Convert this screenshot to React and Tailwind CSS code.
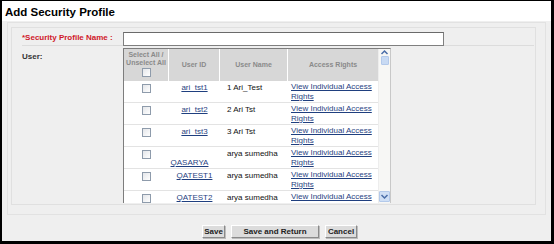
import React from "react";

const users = [
  { id: "ari_tst1", name: "1 Ari_Test" },
  { id: "ari_tst2", name: "2 Ari Tst" },
  { id: "ari_tst3", name: "3 Ari Tst" },
  { id: "QASARYA", name: "arya sumedha", wrapId: true },
  { id: "QATEST1", name: "arya sumedha" },
  { id: "QATEST2", name: "arya sumedha" },
];

const Box = () => (
  <span className="inline-block w-[9px] h-[9px] border border-[#8e9bab] bg-gradient-to-br from-[#e4e6ea] to-white" />
);

const Btn = ({ label, w }) => (
  <button
    className={`${w} h-[13px] text-[8px] leading-[11px] font-bold text-[#222] bg-[#dcdcdc] border border-t-white border-l-white border-r-[#8a8a8a] border-b-[#8a8a8a] shadow-[1px_1px_0_#bdbdbd]`}
  >
    {label}
  </button>
);

const App = () => {
  return (
    <div
      className="w-[554px] h-[244px] box-border border-black border-t border-l-2 border-r-[3px] border-b-[3px] flex flex-col bg-[#efefef] overflow-hidden"
      style={{ fontFamily: '"Liberation Sans", Arial, sans-serif' }}
    >
      <div className="h-[20px] bg-white px-[3px] pt-[5px] text-[11.5px] leading-[13px] font-bold text-black">
        Add Security Profile
      </div>
      <div className="flex-1 px-[5px] pt-[1px]">
        <div className="border border-[#e2e2e2] pr-[9px] pb-[8px] h-[193px]">
          <div className="border border-[#e0e0e0] ml-[3px] mt-[4px] h-[178px] pl-[10px] pr-[1px]">
            <div className="flex items-start h-[18px] border-b border-[#dcdcdc]">
              <div className="w-[101px] pt-[5px] text-[8px] leading-[9px] font-bold text-[#d0182a]">
                *Security Profile Name :
              </div>
              <div className="mt-[4px] w-[321px] h-[14px] bg-white border border-[#7f7f7f] border-t-[#6a6a6a]" />
            </div>
            <div className="flex items-start">
              <div className="w-[101px] pt-[6px] text-[8px] leading-[9px] font-bold text-[#333]">
                User:
              </div>
              <div className="mt-[2px] w-[268px] h-[155px] border border-[#7d7d7d] border-r-[#c8c8c8] border-b-0 flex bg-white overflow-hidden">
                <div className="w-[255px] flex flex-col">
                  <div className="flex h-[32px] shrink-0 bg-[#d7d7d7] text-[7px] leading-[8px] font-bold text-[#8a8a8a]">
                    <div className="w-[45px] flex flex-col items-center pt-[2px] border-r border-white">
                      <span>Select All /</span>
                      <span>Unselect All</span>
                      <span className="mt-[1px]"><Box /></span>
                    </div>
                    <div className="w-[51px] flex items-center justify-center border-r border-white">User ID</div>
                    <div className="w-[68px] flex items-center justify-center border-r border-white">User Name</div>
                    <div className="flex-1 flex items-center justify-center">Access Rights</div>
                  </div>
                  {users.map((u) => (
                    <div
                      key={u.id}
                      className="flex h-[22px] shrink-0 border-b border-[#e3e3e3] text-[8px] leading-[10px]"
                    >
                      <div className="w-[45px] flex justify-center pt-[3px]">
                        <Box />
                      </div>
                      <div className="w-[51px] flex justify-center pt-[2px]">
                        <a href="#" className="text-[#1f3f7f] underline h-fit">
                          {u.wrapId ? (
                            <span className="block pt-[9px] -ml-[10px]">{u.id}</span>
                          ) : (
                            u.id
                          )}
                        </a>
                      </div>
                      <div className="w-[68px] pl-[7px] pt-[2px] text-[#111]">{u.name}</div>
                      <div className="flex-1 pl-[3px] pt-[1px]">
                        <a href="#" className="text-[#1f3f7f] underline">
                          View Individual Access Rights
                        </a>
                      </div>
                    </div>
                  ))}
                </div>
                <div className="w-[12px] flex flex-col justify-between bg-[#f7f7f5] border-l border-[#ededed]">
                  <div className="h-[18px] flex flex-col items-center">
                    <svg width="9" height="7" viewBox="0 0 9 7">
                      <path d="M1.5 5 L4.5 2 L7.5 5" stroke="#4a6da8" strokeWidth="1.5" fill="none" />
                    </svg>
                    <div className="w-[8px] h-[9px] bg-[#c8daf3] border border-[#b3c9ea] rounded-[1px]" />
                  </div>
                  <div className="h-[11px] w-[11px] flex items-center justify-center bg-[#cfdff5] border border-[#b3c9ea] rounded-[1px] mb-[1px]">
                    <svg width="9" height="7" viewBox="0 0 9 7">
                      <path d="M1.5 2 L4.5 5 L7.5 2" stroke="#4a6da8" strokeWidth="1.5" fill="none" />
                    </svg>
                  </div>
                </div>
              </div>
            </div>
          </div>
        </div>
        <div className="flex justify-center gap-[6px] mt-[10px] pl-[6px]">
          <Btn label="Save" w="w-[23px]" />
          <Btn label="Save and Return" w="w-[88px]" />
          <Btn label="Cancel" w="w-[32px]" />
        </div>
      </div>
    </div>
  );
};

export default App;
